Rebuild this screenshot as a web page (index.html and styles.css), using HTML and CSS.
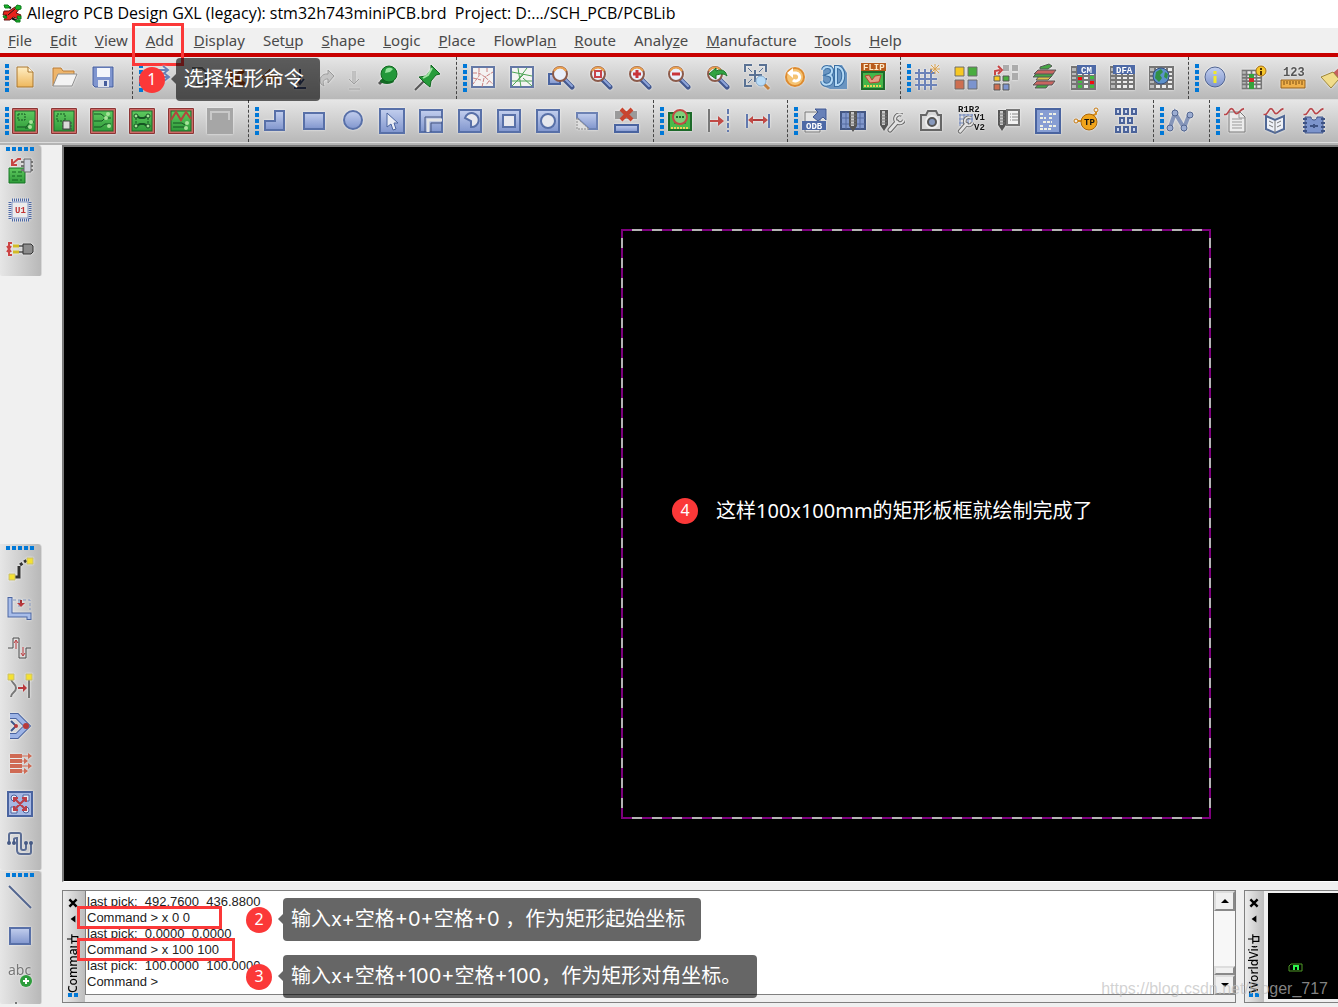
FILE: index.html
```html
<!DOCTYPE html>
<html lang="zh-CN">

<head>
    <meta charset="UTF-8">
    <meta name="viewport" content="width=device-width, initial-scale=1.0">
    <title>Allegro PCB Design GXL (legacy)</title>
    <link rel="stylesheet" href="styles.css">
</head>

<body>
    <!-- Shared gradients and symbols -->
    <svg class="defs" width="0" height="0" aria-hidden="true">
        <defs>
            <linearGradient id="blue" x1="0" y1="0" x2="0" y2="1">
                <stop offset="0" stop-color="#c3cfee" />
                <stop offset="1" stop-color="#8095cd" />
            </linearGradient>
            <linearGradient id="green" x1="0" y1="0" x2="0" y2="1">
                <stop offset="0" stop-color="#5fc95f" />
                <stop offset="1" stop-color="#2f9c3a" />
            </linearGradient>
            <linearGradient id="gold" x1="0" y1="0" x2="0" y2="1">
                <stop offset="0" stop-color="#ffeec4" />
                <stop offset="1" stop-color="#eeb75c" />
            </linearGradient>
            <symbol id="lens" viewBox="0 0 28 28">
                <path d="M17 16l7 7" stroke="#43588f" stroke-width="5" stroke-linecap="round" />
                <path d="M17 15l7 7" stroke="#8ea5da" stroke-width="2" stroke-linecap="round" />
                <circle cx="12" cy="10" r="7" fill="#e9effb" stroke="#8b5a4a" stroke-width="2" />
                <path d="M6 7a7 7 0 0 1 12 0" stroke="#e9a050" stroke-width="2" fill="none" />
            </symbol>
            <symbol id="board" viewBox="0 0 28 28">
                <rect x="1" y="1" width="26" height="26" rx="1" fill="#8c3434" />
                <rect x="2" y="2" width="24" height="24" fill="#cd6a66" />
                <rect x="4" y="4" width="20" height="20" fill="url(#green)" stroke="#1d6a2a" />
            </symbol>
            <symbol id="tile" viewBox="0 0 28 28">
                <rect x="3" y="3" width="22" height="22" fill="url(#blue)" stroke="#5870a8" stroke-width="2" />
            </symbol>
            <symbol id="sheet" viewBox="0 0 28 28">
                <path d="M2 2h25v24H2z" fill="#757575" />
                <path d="M3 4h4v3H3zM3 9h4v2H3zM3 13h4v2H3zM3 17h4v2H3zM3 21h4v3H3z" fill="#b9b9b9" />
                <path d="M9 4h4v3H9zM15 4h4v3h-4zM21 4h4v3h-4zM9 9h4v2H9zM15 9h4v2h-4zM21 9h4v2h-4zM9 13h4v2H9zM15 13h4v2h-4zM21 13h4v2h-4zM9 17h4v2H9zM15 17h4v2h-4zM21 17h4v2h-4zM9 21h4v3H9zM15 21h4v3h-4zM21 21h4v3h-4z" fill="#ededed" />
            </symbol>
            <symbol id="pen" viewBox="0 0 8 24">
                <path d="M0 2h8v15l-4 6-4-6z" fill="#555" />
                <path d="M2 3h3v14H2z" fill="#c8c8c8" />
                <path d="M1 6h6M1 9h6M1 12h6M1 15h6" stroke="#777" />
            </symbol>
            <symbol id="wrench" viewBox="0 0 18 20">
                <path d="M3 17l7-8" stroke="#666" stroke-width="5" stroke-linecap="round" />
                <path d="M15 2a4.500 4.500 0 1 0 2 5" stroke="#666" stroke-width="4" fill="none" />
                <path d="M3 17l7-8" stroke="#e3e3e3" stroke-width="3" stroke-linecap="round" />
                <path d="M15 2a4.500 4.500 0 1 0 2 5" stroke="#e3e3e3" stroke-width="2" fill="none" />
            </symbol>
            <symbol id="wave" viewBox="0 0 28 12">
                <path d="M2 9h2C7 9 8 2 11 2s3 6 6 6 4-5 9-6" fill="none" stroke="#b8474b" stroke-width="2" />
            </symbol>
        </defs>
    </svg>

    <header class="titlebar">
        <svg class="app-icon" viewBox="0 0 20 20">
            <path d="M4 3l5 2M3 12l6 3 7 3M16 3v4" stroke="#111" stroke-width="2" fill="none" />
            <path d="M2 8h5l6-4 5 1-4 5 5 2-2 4-6-2-3 3H2l3-5H1z" fill="#e8231c" stroke="#611" stroke-width="1" />
            <path d="M6 12l8-7" stroke="#1b1b1b" />
            <path d="M2 2h4l2 2-2 1H3zM15 2l4 1v3l-4 1-2-2zM1 13h3l1 2H2zM15 13h4v3h-3zM13 17h5v2h-4z" fill="#19b52c" stroke="#0d7a1b" />
        </svg>
        <h1>Allegro PCB Design GXL (legacy): stm32h743miniPCB.brd&nbsp; Project: D:.../SCH_PCB/PCBLib</h1>
    </header>

    <nav class="menubar">
        <a href="#"><u>F</u>ile</a>
        <a href="#"><u>E</u>dit</a>
        <a href="#"><u>V</u>iew</a>
        <div class="menu-marked">
            <a href="#"><u>A</u>dd</a>
            <div class="mark mark-add"></div>
            <div class="note note-add"><span class="badge">1</span><p class="tip">选择矩形命令</p></div>
        </div>
        <a href="#"><u>D</u>isplay</a>
        <a href="#">Set<u>u</u>p</a>
        <a href="#"><u>S</u>hape</a>
        <a href="#"><u>L</u>ogic</a>
        <a href="#"><u>P</u>lace</a>
        <a href="#">FlowPla<u>n</u></a>
        <a href="#"><u>R</u>oute</a>
        <a href="#">Analy<u>z</u>e</a>
        <a href="#"><u>M</u>anufacture</a>
        <a href="#"><u>T</u>ools</a>
        <a href="#"><u>H</u>elp</a>
    </nav>

    <!-- First toolbar row -->
    <div class="toolbar">
        <div class="tool-group roomy">
            <i class="grip"></i>
            <button aria-label="New"><svg viewBox="0 0 28 28"><path d="M6 3h11l5 5v15H6z" fill="url(#gold)" stroke="#a8742c" /><path d="M17 3v5h5" fill="#fff6dc" stroke="#a8742c" /></svg></button>
            <button aria-label="Open"><svg viewBox="0 0 28 28"><path d="M3 22V4h8l2 3h11v6" fill="#eeb56b" stroke="#b97b35" /><path d="M3 22l5-12h19l-5 12z" fill="#f3f3f3" stroke="#8e8e8e" /></svg></button>
            <button aria-label="Save"><svg viewBox="0 0 28 28"><path d="M4 3h20v20H6l-2-2z" fill="#7f95cf" stroke="#455c9c" /><path d="M8 4h13v9H8z" fill="#f4f6fb" /><path d="M9 16h11v7H9z" fill="#dfe3ee" /><path d="M15 17h3v5h-3z" fill="#455c9c" /></svg></button>
        </div>
        <div class="tool-group roomy">
            <i class="grip"></i>
            <button aria-label="Move"><svg viewBox="0 0 28 28"><path d="M9 4v10M4 6h18M18 2l5 4-5 4M14 13h9M19 9l5 4-5 4" fill="none" stroke="#6881b8" stroke-width="2" /></svg></button>
            <button aria-label="Copy"><svg viewBox="0 0 28 28"><path d="M9 4h9l4 4v12H9z" fill="#ededed" stroke="#777" stroke-width="2" /><path d="M4 9h9v13H4z" fill="#ddd" stroke="#777" /></svg></button>
            <button aria-label="Delete"><svg viewBox="0 0 28 28"><path d="M5 7l16 14M20 6L6 22" stroke="#b04a16" stroke-width="5" /></svg></button>
            <button class="narrow" aria-label="Undo"><svg viewBox="0 0 28 28"><path d="M6 13l8-8v5c7 0 9 5 8 11-2-4-4-5-8-5v5z" fill="#d58a4c" stroke="#9c5a25" /></svg></button>
            <button class="narrow" aria-label="Undo list"><svg viewBox="0 0 28 28"><path d="M16 5v14M12 15l4 5 4-5M10 24h12" fill="none" stroke="#3c4d75" stroke-width="2" /></svg></button>
            <button class="narrow" aria-label="Redo" disabled><svg viewBox="0 0 28 28"><path d="M22 12l-6-6v4C10 9 6 15 9 20l3 2c-2-5 0-7 4-7v4z" fill="#c4c4c4" stroke="#999" /></svg></button>
            <button class="narrow" aria-label="Redo list" disabled><svg viewBox="0 0 28 28"><path d="M15 7v12M13 7v12M9 15l5 5 5-5M9 25h11" fill="none" stroke="#a0a0a0" /></svg></button>
            <button aria-label="Fix"><svg viewBox="0 0 28 28"><path d="M5 20l6-6" stroke="#555" stroke-width="3" /><ellipse cx="13" cy="17" rx="7" ry="3" fill="#146a25" /><circle cx="15" cy="10" r="8" fill="#23983a" stroke="#11661f" /><path d="M12 5a5 4 0 0 1 7 0l-3 3-5 1z" fill="#94e29b" /></svg></button>
            <button aria-label="Unfix"><svg viewBox="0 0 28 28"><path d="M2 26l11-11" stroke="#555" stroke-width="2" /><path d="M18 1l9 9-4 1-5 6-1 6-5-4-6-6 7-1 5-6z" fill="#279c3b" stroke="#11661f" /><path d="M19 4l-4 7-5 3" stroke="#a0e5a3" stroke-width="2" fill="none" /></svg></button>
        </div>
        <div class="tool-group">
            <i class="grip"></i>
            <button aria-label="Unrats all"><svg viewBox="0 0 28 28"><path d="M3 3h22v20H3z" fill="#f4f2f2" stroke="#6478a5" stroke-width="2" /><path d="M4 9h6l6 4 8-5M10 4v8l-6 8M15 14l-2 9M16 13l8 7M4 14l8 2M18 4v5M20 17l-3 4" stroke="#c98080" stroke-width="1" stroke-dasharray="4 1" fill="none" /></svg></button>
            <button aria-label="Rats all"><svg viewBox="0 0 28 28"><path d="M3 3h22v20H3z" fill="#f4f4f2" stroke="#6478a5" stroke-width="2" /><path d="M4 8l20 4M10 4l3 19M4 17h20M19 4L9 17M4 22l12-12M15 14l9 8" stroke="#4ea556" stroke-width="1" fill="none" /></svg></button>
            <button aria-label="Zoom points"><svg viewBox="0 0 28 28"><path d="M2 10h11v10H2z" fill="url(#blue)" stroke="#4a64a0" stroke-width="2" /><use href="#lens" x="1" y="0" width="28" height="28" /></svg></button>
            <button aria-label="Zoom fit"><svg viewBox="0 0 28 28"><use href="#lens" /><path d="M9 7h6v6H9z" fill="none" stroke="#c9434a" stroke-width="2" /></svg></button>
            <button aria-label="Zoom in"><svg viewBox="0 0 28 28"><use href="#lens" /><path d="M12 6v8M8 10h8" stroke="#c9343a" stroke-width="3" /></svg></button>
            <button aria-label="Zoom out"><svg viewBox="0 0 28 28"><use href="#lens" /><path d="M8 10h8" stroke="#c9343a" stroke-width="3" /></svg></button>
            <button aria-label="Zoom previous"><svg viewBox="0 0 28 28"><use href="#lens" /><path d="M6 10l7-6v3c7-3 10 1 11 5-4-3-6-2-11-1v4z" fill="#31a343" stroke="#1b7529" /></svg></button>
            <button aria-label="Zoom center"><svg viewBox="0 0 28 28"><path d="M3 8V1h7M17 1h7v7M3 15v7h7M24 14v2M13 6v12M7 11h13" fill="none" stroke="#5a7294" stroke-width="2" /><path d="M6 4l4 4M21 4l-4 4M6 19l4-4" stroke="#5a7294" /><path d="M21 19l6 6" stroke="#c4803c" stroke-width="3" /><circle cx="19" cy="17" r="5" fill="#b8dbf6" stroke="#87a9c9" /></svg></button>
            <button aria-label="Refresh"><svg viewBox="0 0 28 28"><circle cx="14" cy="13" r="9" fill="#f5c474" stroke="#dd8b30" stroke-width="2" /><path d="M10 9h5a4 4 0 1 1-3 7" fill="none" stroke="#fff" stroke-width="3" /><path d="M6 9l6-5v10z" fill="#fff" /></svg></button>
            <button aria-label="3D view"><svg viewBox="0 0 28 28"><path d="M3 3l8-2 3 4 2-4h6l5 8v16H10l-7-3z" fill="#6a95c1" /><path d="M3 6c1-4 9-4 9 1 0 3-3 4-3 4s4 1 3 5c-1 6-9 6-10 1" fill="none" stroke="#3b6fa3" stroke-width="4" /><path d="M3 6c1-4 9-4 9 1 0 3-3 4-3 4s4 1 3 5c-1 6-9 6-10 1" fill="none" stroke="#b4d9f5" stroke-width="2" /><path d="M16 3h2c7 2 7 15 0 18h-2z" fill="none" stroke="#3b6fa3" stroke-width="4" /><path d="M16 3h2c7 2 7 15 0 18h-2z" fill="none" stroke="#b4d9f5" stroke-width="2" /></svg></button>
            <button aria-label="Flip design"><svg viewBox="0 0 28 28"><path d="M3 8h22v17H3z" fill="#45b64a" stroke="#1d6a2a" stroke-width="2" /><path d="M6 12l4-1 3 5 3-4 6-1-2 7-9 1z" fill="#e3a087" stroke="#b9442c" /><path d="M5 22h18" stroke="#efd15a" stroke-dasharray="2 1" stroke-width="2" /><path d="M2-1h25v8H2z" fill="#b85a1b" /><text x="4" y="6" class="pixel cream">FLIP</text></svg></button>
        </div>
        <div class="tool-group">
            <i class="grip"></i>
            <button aria-label="Grid toggle"><svg viewBox="0 0 28 28"><path d="M6 5v21M12 5v21M18 5v21M2 9h20M2 15h22M2 21h22" stroke="#6c83b9" stroke-width="2" /><path d="M22 0v10M17 5h10M18 1l8 8M26 1l-8 8" stroke="#dba24d" /></svg></button>
            <button aria-label="Color"><svg viewBox="0 0 28 28"><g stroke="#6b6b6b"><path d="M3 3h9v9H3z" fill="#f7c823" /><path d="M16 3h9v9h-9z" fill="#4aad3f" /><path d="M3 16h9v9H3z" fill="#cd6e50" /><path d="M16 16h9v9h-9z" fill="#7c94ce" /></g></svg></button>
            <button aria-label="Swap color"><svg viewBox="0 0 28 28"><path d="M12 1h6v6h-6zM21 1h6v6h-6zM21 9h6v7h-6z" fill="#acacac" /><path d="M4 11V7l5-1M7 2l4 4-4 4" fill="none" stroke="#c74444" stroke-width="2" /><g stroke="#555"><path d="M3 12h6v5H3z" fill="#f7c823" /><path d="M12 12h6v5h-6z" fill="#4aad3f" /><path d="M3 20h6v6H3z" fill="#cd6e50" /><path d="M12 20h6v6h-6z" fill="#7c94ce" /></g></svg></button>
            <button aria-label="Cross section"><svg viewBox="0 0 28 28"><g stroke="#555"><path d="M9 19h11l-4 5H5z" fill="#45a746" /><path d="M7 17h18l-3 4H3z" fill="#c96561" /><path d="M9 12h13l-4 4H6z" fill="#e0c04a" /><path d="M7 9h17l-3 4H3z" fill="#45a746" /><path d="M8 6h18l-3 4H4z" fill="#c96561" /><path d="M10 3l9-3 3 2-4 3h-8z" fill="#45a746" /></g></svg></button>
            <button aria-label="Constraint manager"><svg viewBox="0 0 28 28"><use href="#sheet" /><path d="M9 12h4v3H9zM9 17h4v2H9zM9 21h4v3H9zM21 12h4v3h-4zM21 21h4v3h-4z" fill="#40bb40" /><path d="M9 13h4v3H9zM21 17h4v3h-4z" fill="#f20d0d" /><path d="M8 1h19v9H8z" fill="#4d69a6" /><text x="12" y="9" class="pixel white">CM</text></svg></button>
            <button aria-label="DFA table"><svg viewBox="0 0 28 28"><use href="#sheet" /><path d="M5 1h22v9H5z" fill="#4d69a6" /><text x="8" y="9" class="pixel white">DFA</text></svg></button>
            <button aria-label="Global settings"><svg viewBox="0 0 28 28"><use href="#sheet" /><circle cx="14" cy="12" r="8" fill="#5d91cc" stroke="#334e80" /><path d="M9 8l5-3 2 3-3 3 2 3-3 4-4-4zM18 8l3 2-1 5-3-2z" fill="#318f45" /></svg></button>
        </div>
        <div class="tool-group">
            <i class="grip"></i>
            <button aria-label="Show element"><svg viewBox="0 0 28 28"><circle cx="14" cy="13" r="10" fill="url(#blue)" stroke="#4e628f" stroke-width="1" /><path d="M14 7v3M14 12v7" stroke="#f1e92b" stroke-width="3" /></svg></button>
            <button aria-label="Constraint info"><svg viewBox="0 0 28 28"><use href="#sheet" x="0" y="4" width="23" height="23" /><path d="M9 10h5v15H9z" fill="#35a23c" /><path d="M9 14h5v4H9z" fill="#d32b2b" /><circle cx="21" cy="7" r="5" fill="#f6c72b" stroke="#a36a17" /><path d="M21 4v2M21 7v4" stroke="#503100" stroke-width="2" /></svg></button>
            <button aria-label="Measure"><svg viewBox="0 0 28 28"><text x="4" y="12" class="digits">123</text><path d="M2 16h24v8H2z" fill="#efb04b" stroke="#96601b" /><path d="M5 17v4M8 17v3M11 17v4M14 17v3M17 17v4M20 17v3M23 17v4" stroke="#7b4d12" /></svg></button>
            <button aria-label="Clean"><svg viewBox="0 0 28 28"><path d="M15 9l9-8 5 6-8 8z" fill="#c65e5e" /><path d="M3 13l12-5 6 7-8 9z" fill="#f1dc8a" stroke="#9a8338" /></svg></button>
        </div>
    </div>

    <!-- Second toolbar row -->
    <div class="toolbar">
        <div class="tool-group">
            <i class="grip"></i>
            <button aria-label="General edit"><svg viewBox="0 0 28 28"><use href="#board" /><path d="M7 7h7v6H7z" fill="none" stroke="#155523" stroke-dasharray="2 1" /><path d="M6 20h9l4-5h4M14 21h5" fill="none" stroke="#155523" stroke-width="1" /><circle cx="20" cy="15" r="2" fill="#a8e39a" /><circle cx="19" cy="20" r="2" fill="#a8e39a" /></svg></button>
            <button aria-label="Placement edit"><svg viewBox="0 0 28 28"><use href="#board" /><path d="M7 7h8v7H7z" fill="none" stroke="#155523" stroke-dasharray="2 1" /><path d="M12 16h10M12 19h10M12 22h10" stroke="#444" /><path d="M13 14h7v8h-7z" fill="#dadada" stroke="#444" /></svg></button>
            <button aria-label="Etch edit"><svg viewBox="0 0 28 28"><use href="#board" /><path d="M5 7h7l5 4h5M5 14h8l3-3M5 20h7l4-3h6" fill="none" stroke="#155523" stroke-width="1" /><circle cx="19" cy="7" r="2" fill="#a8e39a" /><circle cx="17" cy="11" r="2" fill="#a8e39a" /><circle cx="20" cy="19" r="2" fill="#a8e39a" /></svg></button>
            <button aria-label="Flow edit"><svg viewBox="0 0 28 28"><use href="#board" /><path d="M8 9l4 2h4l4-2M8 19l4-2h4l4 2" fill="none" stroke="#155523" stroke-width="2" /><path d="M8 11v6M20 11v6" stroke="#155523" stroke-dasharray="2 1" /><g fill="#a8e39a" stroke="#155523"><circle cx="8" cy="9" r="2" /><circle cx="20" cy="9" r="2" /><circle cx="8" cy="19" r="2" /><circle cx="20" cy="19" r="2" /></g></svg></button>
            <button aria-label="Signal edit"><svg viewBox="0 0 28 28"><use href="#board" /><path d="M4 13l5-8 5 8 5-8 5 7" fill="none" stroke="#b5433d" stroke-width="2" /><path d="M6 16h9l3 2M6 20h13" stroke="#155523" stroke-width="1" fill="none" /><circle cx="20" cy="16" r="2" fill="#a8e39a" /><circle cx="19" cy="21" r="2" fill="#a8e39a" /></svg></button>
            <button aria-label="Mode" disabled><svg viewBox="0 0 28 28"><path d="M1 1h26v26H1z" fill="#a6a6a6" /><path d="M5 13V5h18v8" fill="none" stroke="#c9c9c9" stroke-width="2" /></svg></button>
        </div>
        <div class="tool-group">
            <i class="grip"></i>
            <button aria-label="Shape polygon"><svg viewBox="0 0 28 28"><path d="M4 14h10V4h9v19H4z" fill="url(#blue)" stroke="#5870a8" stroke-width="2" /></svg></button>
            <button aria-label="Shape rectangle"><svg viewBox="0 0 28 28"><path d="M4 6h20v16H4z" fill="url(#blue)" stroke="#5870a8" stroke-width="2" /></svg></button>
            <button aria-label="Shape circle"><svg viewBox="0 0 28 28"><circle cx="14" cy="13" r="9" fill="url(#blue)" stroke="#5870a8" stroke-width="2" /></svg></button>
            <button aria-label="Shape select"><svg viewBox="0 0 28 28"><path d="M2 2h24v24H2z" fill="url(#blue)" stroke="#5870a8" stroke-width="2" /><path d="M9 6v14l4-3 2 6 3-1-2-6h4z" fill="#e9ecf4" stroke="#4a64a0" /></svg></button>
            <button aria-label="Shape edit boundary"><svg viewBox="0 0 28 28"><use href="#tile" /><path d="M8 25V10h17M14 25v-9h11" fill="none" stroke="#465680" stroke-width="1" /><path d="M11 25V13h14" fill="none" stroke="#e4e4e4" stroke-width="3" /></svg></button>
            <button aria-label="Void polygon"><svg viewBox="0 0 28 28"><use href="#tile" /><path d="M9 11a7 7 0 1 1 6 9v-6z" fill="#e7e8ee" stroke="#5870a8" stroke-width="2" /></svg></button>
            <button aria-label="Void rectangle"><svg viewBox="0 0 28 28"><use href="#tile" /><path d="M8 8h12v12H8z" fill="#e7e8ee" stroke="#5870a8" stroke-width="2" /></svg></button>
            <button aria-label="Void circle"><svg viewBox="0 0 28 28"><use href="#tile" /><circle cx="14" cy="14" r="7" fill="#e7e8ee" stroke="#5870a8" stroke-width="2" /></svg></button>
            <button aria-label="Void element"><svg viewBox="0 0 28 28"><path d="M4 6h20v16h-8L4 11z" fill="url(#blue)" stroke="#6d82b4" stroke-width="2" /><path d="M4 11v11h12z" fill="#dedede" stroke="#888" stroke-dasharray="2 1" /></svg></button>
            <button aria-label="Delete islands"><svg viewBox="0 0 28 28"><path d="M3 4h22v8H3z" fill="#9a9a9a" /><path d="M9 2l11 11M20 2L9 13" stroke="#c8452f" stroke-width="4" /><path d="M3 18h23v7H3z" fill="url(#blue)" stroke="#4a64a0" stroke-width="2" /></svg></button>
        </div>
        <div class="tool-group roomy">
            <i class="grip"></i>
            <button aria-label="Highlight"><svg viewBox="0 0 28 28"><path d="M3 6h22v17H3z" fill="#49ba4a" stroke="#1d6a2a" stroke-width="2" /><path d="M5 21h18" stroke="#efd15a" stroke-dasharray="2 1" stroke-width="2" /><path d="M8 12h12M8 16h12" stroke="#1d6a2a" /><circle cx="14" cy="10" r="7" fill="#7fd07a" stroke="#c14a45" stroke-width="2" /><path d="M10 10h2M13 10h2M16 10h2" stroke="#1d6a2a" stroke-width="2" /></svg></button>
            <button aria-label="Dimension edge"><svg viewBox="0 0 28 28"><path d="M4 2v23" stroke="#777" stroke-width="2" /><path d="M23 2v23" stroke="#6279ae" stroke-width="2" stroke-dasharray="5 2" /><path d="M5 14h9" stroke="#c14a45" stroke-width="2" /><path d="M13 9l6 5-6 5z" fill="#c14a45" /></svg></button>
            <button aria-label="Dimension linear"><svg viewBox="0 0 28 28"><path d="M3 7v14M25 7v14" stroke="#6279ae" stroke-width="2" /><path d="M6 13h16" stroke="#b33c3c" stroke-width="2" /><path d="M9 9l-5 4 5 4zM19 9l5 4-5 4z" fill="#c14a45" /></svg></button>
        </div>
        <div class="tool-group">
            <i class="grip"></i>
            <button aria-label="ODB export"><svg viewBox="0 0 28 28"><path d="M5 5h15v20H5z" fill="#e6e6e6" stroke="#777" /><path d="M13 10l5-5-3-3h11v11l-3-3-5 4z" fill="#6881b8" stroke="#3f5790" /><path d="M2 14h24v9H2z" fill="#4d69a6" /><text x="6" y="22" class="pixel white">ODB</text></svg></button>
            <button aria-label="Artwork"><svg viewBox="0 0 28 28"><path d="M2 5h24v17H2z" fill="#8298cc" stroke="#445784" stroke-width="2" /><path d="M7 5v17M21 5v17M2 11h24M2 17h24" stroke="#556ba0" /><use href="#pen" x="10" y="2" width="8" height="24" /></svg></button>
            <button aria-label="NC parameters"><svg viewBox="0 0 28 28"><use href="#pen" x="2" y="1" width="8" height="24" /><use href="#wrench" x="9" y="6" width="18" height="20" /></svg></button>
            <button aria-label="Snapshot"><svg viewBox="0 0 28 28"><path d="M4 8h5l2-4h8l2 4h3v15H4z" fill="#d8d8d8" stroke="#666" stroke-width="2" /><circle cx="15" cy="15" r="6" fill="#555" stroke="#eee" stroke-width="2" /><circle cx="15" cy="15" r="3" fill="#8799bd" /></svg></button>
            <button aria-label="Auto rename"><svg viewBox="0 0 28 28"><path d="M4 7v12M8 7v12M12 7v12M16 7v8M3 8h14M3 12h14M3 16h10" stroke="#6c83b9" /><use href="#wrench" x="1" y="9" width="17" height="18" /><text x="2" y="5" class="pixel black">R1R2</text><text x="18" y="13" class="pixel black">V1</text><text x="18" y="23" class="pixel black">V2</text></svg></button>
            <button aria-label="NC legend"><svg viewBox="0 0 28 28"><use href="#pen" x="3" y="1" width="8" height="24" /><path d="M12 3h12v15H12z" fill="#f3f3f3" stroke="#777" stroke-width="2" /><path d="M15 7h8M15 10h8M15 13h8" stroke="#888" stroke-dasharray="1 1 6" /></svg></button>
            <button aria-label="Thieving"><svg viewBox="0 0 28 28"><path d="M2 2h24v24H2z" fill="#879ed3" stroke="#4a64a0" stroke-width="2" /><path d="M6 7h3M15 7h7M6 11h6M15 11h3M9 15h9M6 19h3M15 19h7M6 22h12" stroke="#eef0e4" stroke-width="2" stroke-dasharray="3 1" /></svg></button>
            <button aria-label="Testprep"><svg viewBox="0 0 28 28"><path d="M2 14h8M17 10l6-3V2" stroke="#d78d1e" stroke-width="2" fill="none" /><circle cx="3" cy="14" r="2" fill="#eee" stroke="#c4780e" /><circle cx="23" cy="3" r="2" fill="#eee" stroke="#c4780e" /><circle cx="16" cy="15" r="8" fill="#f0a41b" stroke="#a7650b" stroke-width="1" /><text x="11" y="18" class="pixel black">TP</text></svg></button>
            <button aria-label="Panel"><svg viewBox="0 0 28 28"><g fill="#cbd6ee" stroke="#4b639a" stroke-width="2"><path d="M4 2h4v5H4zM12 2h4v5h-4zM20 2h4v5h-4zM8 11h4v5H8zM16 11h4v5h-4zM4 20h4v5H4zM12 20h4v5h-4zM20 20h4v5h-4z" /></g></svg></button>
        </div>
        <div class="tool-group roomy">
            <i class="grip"></i>
            <button aria-label="Net topology"><svg viewBox="0 0 28 28"><path d="M4 20L9 6l9 15 5-13" fill="none" stroke="#8595b9" stroke-width="4" /><g fill="#9cadd2" stroke="#52658f"><circle cx="4" cy="21" r="3" /><circle cx="9" cy="6" r="3" /><circle cx="18" cy="21" r="3" /><circle cx="24" cy="8" r="3" /></g></svg></button>
        </div>
        <div class="tool-group">
            <i class="grip"></i>
            <button aria-label="Signal report"><svg viewBox="0 0 28 28"><path d="M7 5h11l5 5v15H7z" fill="#ececec" stroke="#777" /><path d="M17 5v6h6M10 12h10M10 15h10M10 18h10M10 21h10" stroke="#999" fill="none" /><use href="#wave" x="0" y="0" width="24" height="10" /></svg></button>
            <button aria-label="Signal library"><svg viewBox="0 0 28 28"><path d="M5 9l9 4 9-4v13l-9 4-9-4z" fill="#eef1f7" stroke="#506896" stroke-width="2" /><path d="M14 13v13M8 14l4 2M8 18l4 2M20 14l-4 2M20 18l-4 2" stroke="#777" /><use href="#wave" x="0" y="0" width="25" height="10" /></svg></button>
            <button aria-label="Signal model"><svg viewBox="0 0 28 28"><path d="M5 10h6c0 4 6 4 6 0h6v16H5z" fill="#7c94cc" stroke="#3e5384" /><path d="M3 12h4M3 16h4M3 20h4M3 24h4M21 12h4M21 16h4M21 20h4M21 24h4M10 19h3M15 19h3M14 17v4" stroke="#3e5384" stroke-width="2" /><use href="#wave" x="1" y="0" width="25" height="10" /></svg></button>
        </div>
    </div>

    <main class="workspace">
        <aside class="rails">
            <div class="rail">
                <i class="grip"></i>
                <button aria-label="Place manual"><svg viewBox="0 0 28 28"><path d="M3 11h16v15H3z" fill="url(#green)" stroke="#157222" stroke-width="1" /><path d="M6 15h4M12 15h4M6 19h3M11 19h5M6 23h6M14 23h2" stroke="#126220" stroke-width="1" /><path d="M6 2v6h5M6 7l6-5h3" stroke="#c74444" stroke-width="2" fill="none" /><path d="M15 5h12M15 9h12M15 13h12" stroke="#777" stroke-width="2" /><path d="M18 2h7v13h-7z" fill="#cdd1dc" stroke="#666" /></svg></button>
                <button aria-label="Place component"><svg viewBox="0 0 28 28"><path d="M6 4h17M6 24h17M4 6v17M24 6v17" stroke="#4d69a6" stroke-width="3" stroke-dasharray="1 1" /><path d="M6 6h16v16H6z" fill="#ececec" stroke="#8699c5" /><text x="9" y="17" class="pixel red">U1</text></svg></button>
                <button aria-label="Place swap"><svg viewBox="0 0 28 28"><path d="M6 8H3v5M6 20H3v-5M1 11l2 3 2-3M1 17l2-3 2 3" stroke="#c44" stroke-width="2" fill="none" /><path d="M7 11h6M7 17h6" stroke="#d2bb25" stroke-width="3" /><path d="M13 11h4M13 17h4" stroke="#777" stroke-width="2" /><path d="M17 9h8l2 2v6l-2 2h-8z" fill="#8c8c8c" stroke="#333" stroke-width="1" /></svg></button>
            </div>
            <div class="rail rail-middle">
                <i class="grip"></i>
                <button aria-label="Add connect"><svg viewBox="0 0 28 28"><path d="M7 21h6V10" fill="none" stroke="#333" stroke-width="3" /><path d="M14 9l7-5" stroke="#333" stroke-width="3" stroke-dasharray="3 2" /><g fill="#f4e132" stroke="#c9bf6b"><path d="M3 18h6v6H3zM21 2h6v6h-6z" /></g></svg></button>
                <button aria-label="Slide"><svg viewBox="0 0 28 28"><path d="M7 5h17v10M13 5v7" fill="none" stroke="#8195bd" stroke-width="1" stroke-dasharray="3 2" /><path d="M4 2v18h19v5" fill="none" stroke="#4a64a0" stroke-width="5" /><path d="M4 3v17h19v4" fill="none" stroke="#a8bde9" stroke-width="3" /><path d="M15 5v4" stroke="#a32f32" stroke-width="2" /><path d="M11 8h8l-4 4z" fill="#b8383c" /></svg></button>
                <button aria-label="Delay tune"><svg viewBox="0 0 28 28"><path d="M2 14h5V4h6v20h7V14h5" fill="none" stroke="#4a4a4a" stroke-width="1" /><path d="M10 15V7M8 9l2-3 2 3M17 13v8M15 19l2 3 2-3" fill="none" stroke="#b8383c" stroke-width="1" /></svg></button>
                <button aria-label="Custom smooth"><svg viewBox="0 0 28 28"><path d="M5 5c0 6 5 5 5 10S5 19 5 24M23 5v20" fill="none" stroke="#777" stroke-width="2" /><path d="M12 15h6" stroke="#b8383c" stroke-width="2" /><path d="M17 11l4 4-4 4z" fill="#b8383c" /><g fill="#f4e132" stroke="#c9bf6b"><path d="M2 1h6v6H2zM20 1h6v6h-6z" /></g></svg></button>
                <button aria-label="Gloss"><svg viewBox="0 0 28 28"><path d="M4 4h7l10 10-10 10H4" fill="none" stroke="#4a64a0" stroke-width="6" /><path d="M4 4h7l10 10-10 10H4" fill="none" stroke="#9db4e6" stroke-width="4" /><path d="M5 9l4 4M5 19l4-4" stroke="#3d5689" stroke-width="2" /><circle cx="10" cy="14" r="2" fill="#b83a3a" /><circle cx="20" cy="14" r="3" fill="#b83a3a" /></svg></button>
                <button aria-label="Fanout"><svg viewBox="0 0 28 28"><path d="M4 5h12M4 10h12M4 15h12M4 20h12" stroke="#cf6a54" stroke-width="4" /><path d="M15 5h10M15 10h6M15 15h10M15 20h6" stroke="#cf6a54" stroke-width="1" /><path d="M22 2l4 3-4 3zM18 7l4 3-4 3zM22 12l4 3-4 3zM18 17l4 3-4 3z" fill="#cf6a54" /></svg></button>
                <button aria-label="Spread"><svg viewBox="0 0 28 28"><path d="M2 2h24v24H2z" fill="#a6b8e3" stroke="#4a64a0" stroke-width="2" /><path d="M17 5h6v6h-6zM5 17h6v6H5z" fill="#e9ecf4" stroke="#4a64a0" /><g fill="#e9ecf4" stroke="#4a64a0"><circle cx="8" cy="8" r="3" /><circle cx="20" cy="20" r="3" /></g><path d="M8 8l12 12M20 8L8 20M8 12V8h4M16 8h4v4M8 16v4h4M16 20h4v-4" fill="none" stroke="#bc3f48" stroke-width="2" /></svg></button>
                <button aria-label="Phase tune"><svg viewBox="0 0 28 28"><path d="M3 14V6q0-2 2-2h8q2 0 2 2v13q0 2 2 2h1q2 0 2-2v-5M8 14v-4q0-1 3-1v12q0 4 4 4h8q2 0 2-2v-9" fill="none" stroke="#5b6d94" stroke-width="2" /><g fill="#465a85"><circle cx="3" cy="14" r="2" /><circle cx="8" cy="14" r="2" /><circle cx="20" cy="14" r="2" /><circle cx="25" cy="14" r="2" /></g></svg></button>
            </div>
            <div class="rail rail-bottom">
                <i class="grip"></i>
                <button aria-label="Add line"><svg viewBox="0 0 28 28"><path d="M3 3l22 22" stroke="#52658f" stroke-width="2" /></svg></button>
                <button aria-label="Add rectangle"><svg viewBox="0 0 28 28"><path d="M4 6h20v16H4z" fill="url(#blue)" stroke="#5870a8" stroke-width="2" /></svg></button>
                <button aria-label="Add text"><svg viewBox="0 0 28 28"><text x="2" y="14" class="abc">abc</text><circle cx="20" cy="20" r="6" fill="#2d9d3c" /><path d="M20 17v6M17 20h6" stroke="#fff" stroke-width="2" /></svg></button>
                <button aria-label="Edit text"><svg viewBox="0 0 28 28"><path d="M10 2v12M6 5h8" stroke="#777" stroke-width="2" /></svg></button>
            </div>
        </aside>

        <div class="content">
            <section class="canvas">
                <!-- Board outline, 100 x 100 mm -->
                <svg class="outline" viewBox="0 0 590 590">
                    <rect x="1" y="1" width="588" height="588" fill="none" stroke="#7d007d" stroke-width="2" />
                    <path d="M11 1h578M11 589h578M1 9v580M589 9v580" stroke="#b4b4b4" stroke-width="2" stroke-dasharray="10 10" />
                </svg>
                <div class="note note-done"><span class="badge">4</span><p>这样100x100mm的矩形板框就绘制完成了</p></div>
            </section>

            <div class="dock">
                <section class="panel console">
                    <div class="panel-strip">
                        <button class="glyph" aria-label="Close"><svg viewBox="0 0 10 10"><path d="M2 2l6 6M8 2L2 8" stroke="#000" stroke-width="2" /></svg></button>
                        <button class="glyph" aria-label="Collapse"><svg viewBox="0 0 10 10"><path d="M7 2v6L3 5z" /></svg></button>
                        <button class="glyph pin" aria-label="Pin"><svg viewBox="0 0 10 10"><path d="M4 1v8M4 3h5v4H4M0 5h4" fill="none" stroke="#000" /></svg></button>
                        <span class="panel-title">Command</span>
                        <i class="grip"></i>
                    </div>
                    <div class="log">
                        <p>last pick:&nbsp; 492.7600&nbsp; 436.8800</p>
                        <p class="marked">Command &gt; x 0 0</p>
                        <p>last pick:&nbsp; 0.0000&nbsp; 0.0000</p>
                        <p class="marked long">Command &gt; x 100 100</p>
                        <p>last pick:&nbsp; 100.0000&nbsp; 100.0000</p>
                        <p>Command &gt;</p>
                    </div>
                    <div class="scroll">
                        <button aria-label="Scroll up"><svg viewBox="0 0 10 6"><path d="M5 1l4 4H1z" /></svg></button>
                        <span class="thumb"></span>
                        <button aria-label="Scroll down"><svg viewBox="0 0 10 6"><path d="M5 5l4-4H1z" /></svg></button>
                    </div>
                    <div class="note note-start"><span class="badge">2</span><p class="tip">输入x+空格+0+空格+0 ，作为矩形起始坐标</p></div>
                    <div class="note note-end"><span class="badge">3</span><p class="tip">输入x+空格+100+空格+100，作为矩形对角坐标。</p></div>
                </section>

                <section class="panel world">
                    <div class="panel-strip">
                        <button class="glyph" aria-label="Close"><svg viewBox="0 0 10 10"><path d="M2 2l6 6M8 2L2 8" stroke="#000" stroke-width="2" /></svg></button>
                        <button class="glyph" aria-label="Collapse"><svg viewBox="0 0 10 10"><path d="M7 2v6L3 5z" /></svg></button>
                        <button class="glyph pin" aria-label="Pin"><svg viewBox="0 0 10 10"><path d="M4 1v8M4 3h5v4H4M0 5h4" fill="none" stroke="#000" /></svg></button>
                        <span class="panel-title">WorldView</span>
                        <i class="grip"></i>
                    </div>
                    <div class="world-map">
                        <svg viewBox="0 0 16 9"><path d="M1 8V3l2-2h11v7z" fill="none" stroke="#4e9a26" /><path d="M6 7V3h4v4" fill="none" stroke="#2df04c" stroke-width="2" /></svg>
                    </div>
                </section>
            </div>
        </div>
    </main>

    <span class="watermark">https://blog.csdn.net/Roger_717</span>
</body>

</html>
```
FILE: styles.css
```css
*,
*::before {
    box-sizing: border-box;
    margin: 0;
    padding: 0;
}

body {
    font-family: "Noto Sans", "Noto Sans CJK SC", sans-serif;
    background-color: #f0f0f0;
    height: 100vh;
    display: flex;
    flex-direction: column;
    overflow: hidden;
    position: relative;
}

.defs {
    position: absolute;
}

button {
    border: none;
    background: none;
    flex: none;
}

/* Title and menu */
.titlebar {
    height: 28px;
    background-color: #fff;
    display: flex;
    align-items: center;
    gap: 5px;
    padding: 0 0 2px 2px;
}

.titlebar h1 {
    font-family: "Open Sans", sans-serif;
    font-size: 16px;
    font-weight: 400;
    white-space: nowrap;
}

.app-icon {
    width: 20px;
    height: 20px;
}

.menubar {
    height: 29px;
    display: flex;
    gap: 18px;
    padding-left: 8px;
    border-bottom: 4px solid #c80000;
    line-height: 25px;
    font-size: 15px;
}

.menubar a {
    color: #4a4a4a;
    text-decoration: none;
}

.menu-marked {
    position: relative;
    margin-right: 2px;
}

/* Toolbars */
.toolbar {
    height: 43px;
    display: flex;
    overflow: hidden;
    flex: none;
    background: linear-gradient(#e6e6e6, #b8b8b8);
    border-bottom: 1px solid #dcdcdc;
}

.tool-group {
    display: flex;
    align-items: center;
    flex: none;
    padding: 0 9px 0 5px;
    border-right: 1px dashed #444;
}

.tool-group + .tool-group {
    padding: 0 8px 0 6px;
}

.tool-group:last-child {
    border-right: none;
}

.toolbar .tool-group.roomy {
    padding-right: 10px;
}

.tool-group button {
    width: 39px;
    height: 40px;
    display: flex;
    align-items: center;
    justify-content: center;
}

.tool-group button.narrow {
    width: 28px;
}

.tool-group svg,
.rail svg {
    width: 28px;
    height: 28px;
    flex: none;
    overflow: visible;
    filter: drop-shadow(0 0 1px rgba(255, 255, 255, 0.8));
}

.grip {
    flex: none;
    width: 4px;
    height: 28px;
    margin-right: -4px;
    background: repeating-linear-gradient(#0078d7 0 4px, transparent 4px 6px);
}

/* Lettering inside the icons */
.pixel {
    font: bold 9px "Liberation Mono", monospace;
}

.digits {
    font: bold 12px "Liberation Mono", monospace;
    fill: #555;
}

.abc {
    font: 14px "Noto Sans", sans-serif;
    fill: #777;
}

.white {
    fill: #fff;
}

.cream {
    fill: #fbe9c8;
}

.black {
    fill: #111;
}

.red {
    fill: #c23434;
}

/* Work area */
.workspace {
    flex: 1;
    min-height: 0;
    display: flex;
    gap: 20px;
    border-top: 2px solid #b4b4b4;
}

.rails {
    width: 42px;
    flex: none;
    display: flex;
    flex-direction: column;
    padding-bottom: 3px;
}

.rail {
    display: flex;
    flex-direction: column;
    align-items: center;
    flex: none;
    padding: 2px 2px 8px 0;
    background: linear-gradient(90deg, #e6e6e6, #b8b8b8);
    border-right: 1px solid #d8d8d8;
    border-radius: 0 4px 2px 2px;
    overflow: hidden;
}

.rail button {
    width: 38px;
    height: 39px;
    display: flex;
    align-items: center;
    justify-content: center;
}

.rail .grip,
.panel-strip .grip {
    width: 28px;
    height: 4px;
    margin: 0;
    background: repeating-linear-gradient(90deg, #0078d7 0 4px, transparent 4px 6px);
}

.rail-middle {
    margin-top: auto;
}

.rail-bottom {
    height: 134px;
    padding-bottom: 0;
    border-top: 1px solid #e8e8e8;
}

.content {
    flex: 1;
    min-width: 0;
    display: flex;
    flex-direction: column;
    gap: 8px;
    padding-bottom: 4px;
}

.canvas {
    flex: 1;
    position: relative;
    background-color: #000;
    border: 2px solid #7a7a7a;
    border-right: none;
    border-bottom: 1px solid #fff;
}

.outline {
    position: absolute;
    left: 557px;
    top: 82px;
    width: 590px;
    height: 590px;
}

/* Annotations */
.note {
    position: absolute;
    display: flex;
    align-items: center;
    gap: 11px;
    z-index: 2;
    color: #fff;
    font-size: 20px;
    line-height: 43px;
    white-space: nowrap;
}

.badge {
    width: 26px;
    height: 26px;
    border-radius: 50%;
    background-color: #fb3838;
    font-size: 16px;
    line-height: 25px;
    text-align: center;
}

.tip {
    position: relative;
    padding: 0 16px 0 8px;
    border-radius: 4px;
    background-color: rgba(0, 0, 0, 0.6);
    font-family: Inter, "Noto Sans CJK SC", sans-serif;
}

.tip::before {
    content: "";
    position: absolute;
    right: 100%;
    top: 16px;
    border: 5px solid transparent;
    border-left: none;
    border-right-color: rgba(0, 0, 0, 0.6);
}

.mark,
.marked::before {
    content: "";
    position: absolute;
    border: 3px solid #fb3838;
}

.mark-add {
    left: -14px;
    top: -5px;
    width: 52px;
    height: 43px;
}

.note-add {
    left: -7px;
    top: 30px;
}

.note-done {
    left: 608px;
    top: 342px;
    gap: 18px;
}

.note-start {
    left: 183px;
    top: 7px;
}

.note-end {
    left: 183px;
    top: 64px;
}

/* Docked panels */
.dock {
    display: flex;
    gap: 8px;
    height: 113px;
    flex: none;
}

.panel {
    display: flex;
    position: relative;
    border: 1px solid #808080;
}

.console {
    flex: 1;
    padding-bottom: 7px;
}

.panel-strip {
    width: 22px;
    flex: none;
    display: flex;
    flex-direction: column;
    align-items: center;
    margin-bottom: -7px;
    padding: 4px 2px 5px 0;
    background: linear-gradient(90deg, #ececec, #bcbcbc);
}

.glyph {
    width: 12px;
    height: 16px;
    flex: none;
}

.glyph.pin {
    margin-top: 5px;
    height: 14px;
}

.glyph svg {
    width: 12px;
    height: 12px;
    display: block;
}

.panel-title {
    flex: 1;
    min-height: 0;
    overflow: hidden;
    writing-mode: vertical-rl;
    transform: rotate(180deg);
    font-size: 12px;
    font-weight: 500;
    line-height: 16px;
}

.panel-strip .grip {
    width: 10px;
}

.log {
    flex: 1;
    min-width: 0;
    padding: 3px 0 0 1px;
    background-color: #fff;
    border: 1px solid #808080;
    border-top: none;
    font: 13px/16px "Liberation Sans", sans-serif;
    color: #222;
}

.marked {
    position: relative;
}

.marked::before {
    left: -10px;
    top: -4px;
    width: 145px;
    height: 23px;
}

.marked.long::before {
    width: 158px;
}

.scroll {
    width: 21px;
    display: flex;
    flex-direction: column;
    background-color: #f7f7f7;
}

.scroll button {
    height: 20px;
    background-color: #f0f0f0;
    border: 2px outset #ddd;
}

.scroll button svg {
    width: 10px;
    height: 6px;
    display: block;
    margin: 0 auto;
}

.thumb {
    height: 9px;
    margin-top: auto;
    background-color: #f0f0f0;
    border: 2px outset #ddd;
}

.world {
    width: 94px;
    border-right: none;
}

.world .panel-strip {
    margin-bottom: 0;
    width: 19px;
}

.world-map {
    flex: 1;
    margin: 2px 0 3px 4px;
    background-color: #000;
    padding: 70px 0 0 20px;
}

.world-map svg {
    width: 16px;
    height: 9px;
    display: block;
}

.watermark {
    position: absolute;
    right: 10px;
    bottom: 8px;
    z-index: 3;
    font: 16px/20px "Liberation Sans", sans-serif;
    color: rgba(190, 190, 190, 0.7);
}
```
